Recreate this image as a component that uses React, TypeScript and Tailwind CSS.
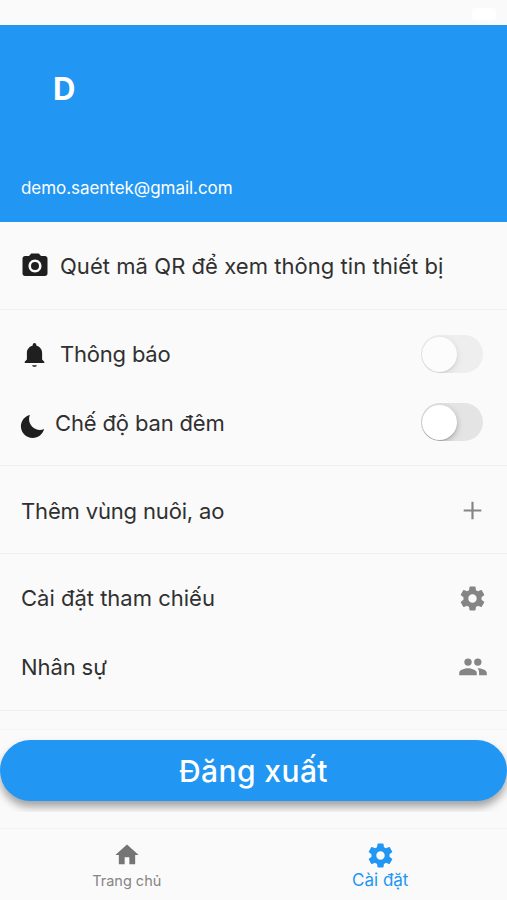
import React, { useState } from 'react';

const icons = {
  camera:
    'M9 2L7.17 4H4c-1.1 0-2 .9-2 2v12c0 1.1.9 2 2 2h16c1.1 0 2-.9 2-2V6c0-1.1-.9-2-2-2h-3.17L15 2H9zm3 15.2c-2.87 0-5.2-2.33-5.2-5.2s2.33-5.2 5.2-5.2 5.2 2.33 5.2 5.2-2.33 5.2-5.2 5.2zm0-2a3.2 3.2 0 1 0 0-6.4 3.2 3.2 0 0 0 0 6.4z',
  bell: 'M12 22.2c.95 0 1.75-.6 1.95-1.4h-3.9c.2.8 1 1.4 1.95 1.4zM18.3 16.2v-5.4c0-3-2.1-5.5-4.85-6.15V3.9c0-.8-.65-1.45-1.45-1.45s-1.45.65-1.45 1.45v.75C7.8 5.3 5.7 7.8 5.7 10.8v5.4L3.9 18.1v1h16.2v-1l-1.8-1.9z',
  plus: 'M19.3 12.9h-6.4v6.4h-1.8v-6.4H4.7v-1.8h6.4V4.7h1.8v6.4h6.4v1.8z',
  gear: 'M19.43 12.98c.04-.32.07-.64.07-.98s-.03-.66-.07-.98l2.11-1.65c.19-.15.24-.42.12-.64l-2-3.46c-.12-.22-.39-.3-.61-.22l-2.49 1c-.52-.4-1.08-.73-1.69-.98l-.38-2.65C14.46 2.18 14.25 2 14 2h-4c-.25 0-.46.18-.49.42l-.38 2.65c-.61.25-1.17.59-1.69.98l-2.49-1c-.23-.09-.49 0-.61.22l-2 3.46c-.13.22-.07.49.12.64l2.11 1.65c-.04.32-.07.65-.07.98s.03.66.07.98l-2.11 1.65c-.19.15-.24.42-.12.64l2 3.46c.12.22.39.3.61.22l2.49-1c.52.4 1.08.73 1.69.98l.38 2.65c.03.24.24.42.49.42h4c.25 0 .46-.18.49-.42l.38-2.65c.61-.25 1.17-.59 1.69-.98l2.49 1c.23.09.49 0 .61-.22l2-3.46c.12-.22.07-.49-.12-.64l-2.11-1.65zM12 15.5c-1.93 0-3.5-1.57-3.5-3.5s1.57-3.5 3.5-3.5 3.5 1.57 3.5 3.5-1.57 3.5-3.5 3.5z',
  home: 'M10 20v-6h4v6h5v-8h3L12 3 2 12h3v8z',
};

function Icon({ name, className }: { name: keyof typeof icons; className?: string }) {
  return (
    <svg viewBox="0 0 24 24" fill="currentColor" className={className}>
      <path d={icons[name]} />
    </svg>
  );
}

function MoonIcon() {
  return (
    <svg viewBox="0 0 512 512" fill="currentColor" className="w-[29px] h-[29px] mt-2 -ml-0.5 text-[#1f1f1f]">
      <path d="M195 125c0-26.3 5.3-51.3 14.9-74.1C118.7 73 51 155.1 51 253c0 114.8 93.2 208 208 208 97.9 0 180-67.7 202.1-158.9-22.8 9.6-47.9 14.9-74.1 14.9-106 0-192-86-192-192z" />
    </svg>
  );
}

// Two overlapping figures with flattened shoulders
function PeopleIcon() {
  return (
    <svg viewBox="0 0 28 18" fill="currentColor" className="w-7 h-[18px] text-[#858585]">
      <circle cx="9" cy="4.1" r="3.7" />
      <circle cx="18.8" cy="4.1" r="3.7" />
      <path d="M9 10.2c-3 0-8.8 1.5-8.8 4.7v2.4h17.6v-2.4c0-3.2-5.8-4.7-8.8-4.7z" />
      <path d="M18.3 10.2c1.1.8 1.8 2.2 1.8 3.8v3.3h7.7v-2.4c0-3.1-5.6-4.7-9.5-4.7z" />
    </svg>
  );
}

interface ToggleProps {
  checked: boolean;
  disabled?: boolean;
  label: string;
  onChange?: () => void;
}

function Toggle({ checked, disabled, label, onChange }: ToggleProps) {
  return (
    <button
      role="switch"
      aria-checked={checked}
      aria-label={label}
      disabled={disabled}
      onClick={onChange}
      className={`flex items-center w-[62px] h-[38px] mr-1 px-px rounded-full overflow-hidden ${checked ? 'justify-end bg-[#2196f3]' : 'bg-[#e4e4e4]'} ${disabled ? 'opacity-50' : ''}`}
    >
      <span className="w-[35px] h-[35px] rounded-full bg-white shadow-[0_2px_6px_rgba(0,0,0,0.25),0_1px_1px_rgba(0,0,0,0.15)]" />
    </button>
  );
}

export default function Settings() {
  const [nightMode, setNightMode] = useState(false);

  return (
    <div className="flex flex-col w-full h-[900px] overflow-hidden bg-[#fafafa] text-[#303030] font-['Inter','Noto_Sans',sans-serif]">
      {/* Status bar */}
      <div className="flex h-[25px] shrink-0 justify-end pt-2 pr-[11px]">
        <div className="w-6 h-3 rounded-sm bg-white" />
      </div>

      {/* Account */}
      <header className="flex flex-col h-[197px] shrink-0 justify-between pl-[21px] pt-[42px] pb-[22px] bg-[#2196f3] text-white">
        <div className="pl-8 text-[31px] leading-[44px] font-bold">D</div>
        <div className="text-[17px] leading-6 tracking-[-0.05px]">demo.saentek@gmail.com</div>
      </header>

      {/* Settings list */}
      <main className="text-[22px] shrink-0">
        <section className="flex items-center h-[88px] px-5 pt-px border-b border-[#f0f0f0]">
          <Icon name="camera" className="w-[30px] h-[30px] text-[#1f1f1f]" />
          <span className="ml-[10px] pt-px tracking-[0.05px]">Quét mã QR để xem thông tin thiết bị</span>
        </section>

        <section className="h-[156px] px-5 py-[10px] border-b border-[#f0f0f0]">
          <div className="flex items-center h-[68px]">
            <Icon name="bell" className="w-[29px] h-[29px] text-[#1f1f1f]" />
            <span className="ml-[11px] flex-1 pt-px tracking-[-0.2px]">Thông báo</span>
            <Toggle checked={false} disabled label="Thông báo" />
          </div>
          <div className="flex items-center h-[68px]">
            <MoonIcon />
            <span className="ml-2 flex-1 pt-0.5 tracking-[-0.15px]">Chế độ ban đêm</span>
            <Toggle checked={nightMode} label="Chế độ ban đêm" onChange={() => setNightMode(!nightMode)} />
          </div>
        </section>

        <section className="flex items-center justify-between h-[88px] px-5 pt-0.5 border-b border-[#f0f0f0]">
          <span className="pl-px pt-px tracking-[-0.16px]">Thêm vùng nuôi, ao</span>
          <Icon name="plus" className="w-[29px] h-[29px] text-[#858585]" />
        </section>

        <section className="h-[157px] px-5 pt-[10px] border-b border-[#f0f0f0]">
          <div className="flex items-center justify-between h-[68px]">
            <span className="pl-px pt-px">Cài đặt tham chiếu</span>
            <Icon name="gear" className="w-[29px] h-[29px] text-[#858585]" />
          </div>
          <div className="flex items-center justify-between h-[69px]">
            <span className="pl-px pt-px tracking-[-0.1px]">Nhân sự</span>
            <PeopleIcon />
          </div>
        </section>
      </main>

      {/* Logout */}
      <div className="h-[19px] shrink-0 border-b border-[#f4f4f4]" />
      <div className="h-[82px] shrink-0 pt-[10px] overflow-hidden">
        <button className="w-full h-[61px] pt-0.5 rounded-full bg-[#2196f3] text-white text-[30px] tracking-[0.4px] font-medium shadow-[0_6px_8px_rgba(0,0,0,0.35)]">
          Đăng xuất
        </button>
      </div>

      {/* Bottom navigation */}
      <nav className="grid grid-cols-2 flex-1 mt-4 border-t border-[#f4f4f4]">
        <button className="flex flex-col items-center pt-3 text-[#757575]">
          <Icon name="home" className="w-7 h-7" />
          <span className="text-[14.5px] leading-6 text-[#858585]">Trang chủ</span>
        </button>
        <button className="flex flex-col items-center pt-3 text-[#2196f3]">
          <Icon name="gear" className="w-[29px] h-[29px]" />
          <span className="text-[17px] leading-5">Cài đặt</span>
        </button>
      </nav>
    </div>
  );
}
